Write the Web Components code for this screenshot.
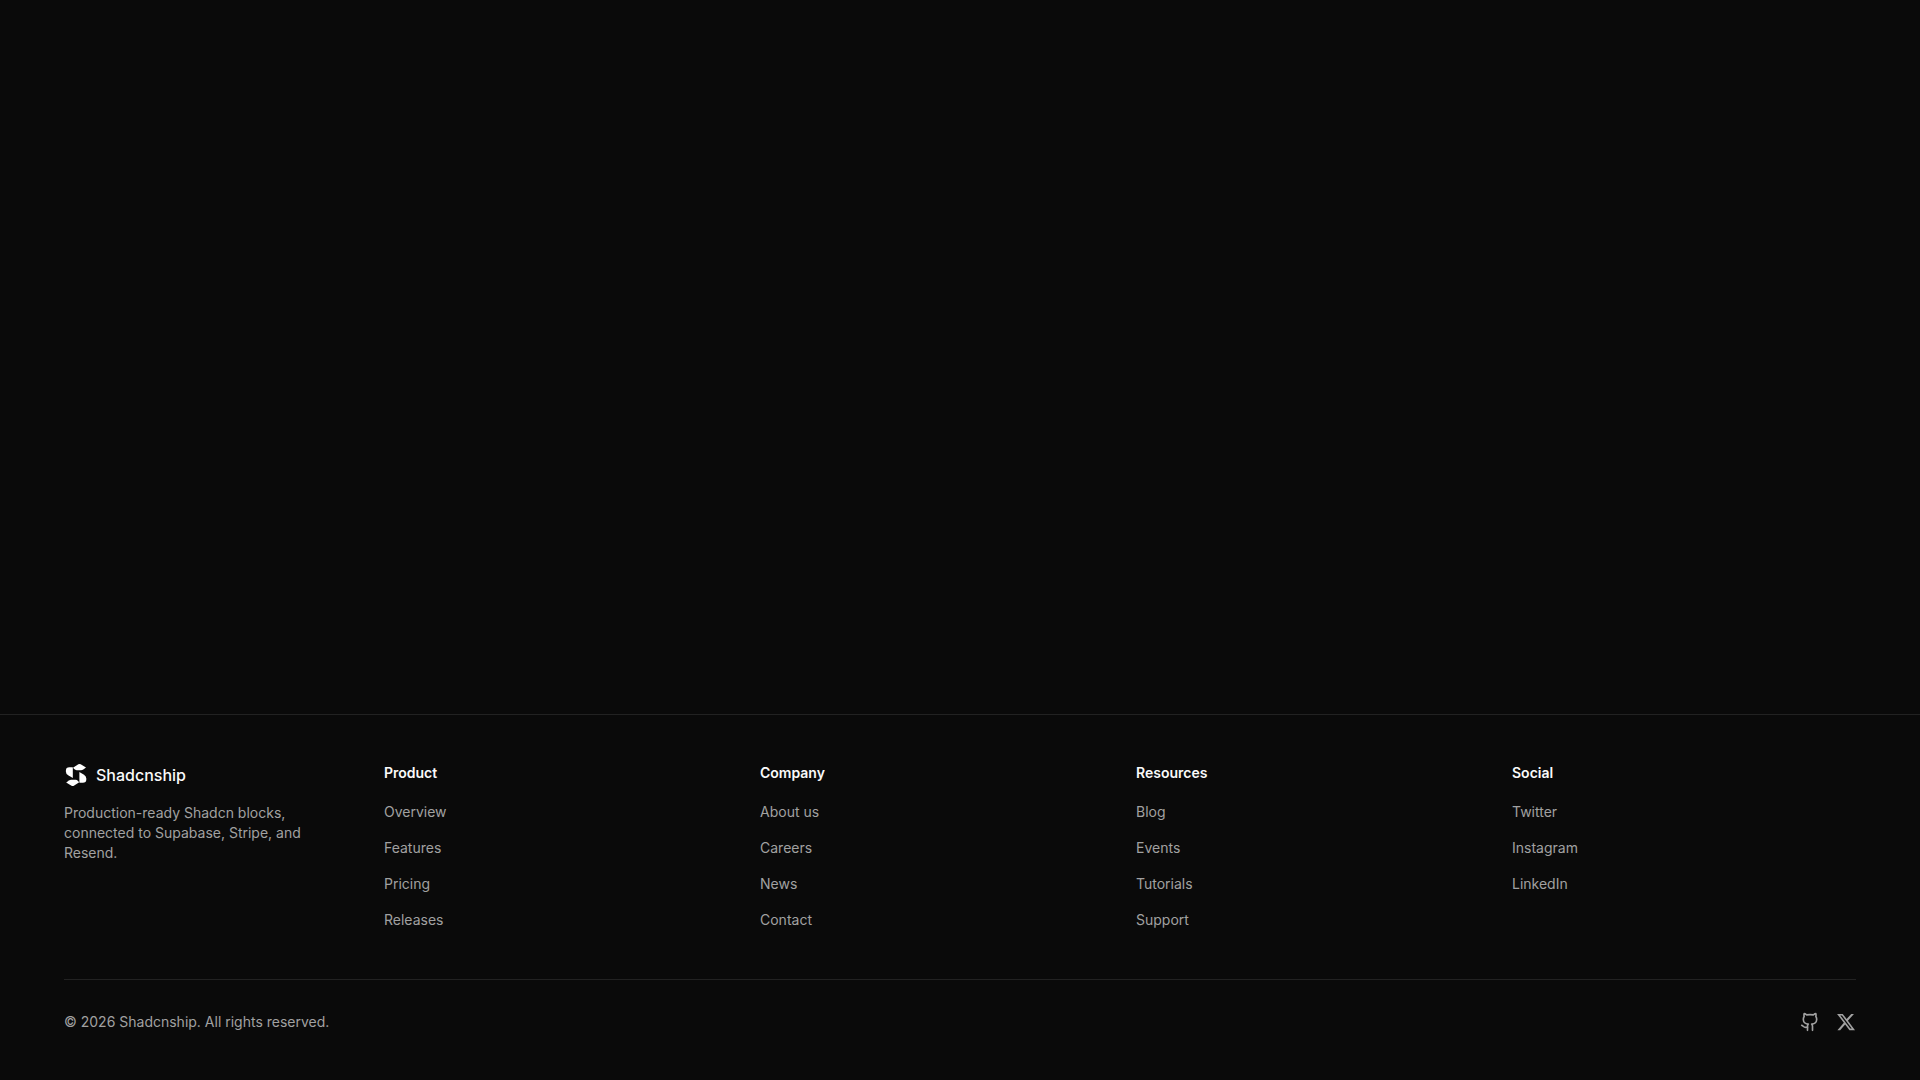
<!DOCTYPE html>
<html lang="en">
<head>
<meta charset="utf-8">
<title>Shadcnship</title>
<style>
  html { color-scheme: dark; }
  body {
    margin: 0;
    background: #0a0a0a;
    color: #fafafa;
    font: 400 16px/24px Inter, "Liberation Sans", sans-serif;
    --muted: #a1a1a1;
    --border: #222222;
  }
</style>
</head>
<body>
<site-page>
  <site-footer slot="footer">
    <brand-block slot="brand" name="Shadcnship">Production-ready Shadcn blocks, connected to Supabase, Stripe, and Resend.</brand-block>
    <link-group heading="Product">
      <nav-link href="#overview">Overview</nav-link>
      <nav-link href="#features">Features</nav-link>
      <nav-link href="#pricing">Pricing</nav-link>
      <nav-link href="#releases">Releases</nav-link>
    </link-group>
    <link-group heading="Company">
      <nav-link href="#about">About us</nav-link>
      <nav-link href="#careers">Careers</nav-link>
      <nav-link href="#news">News</nav-link>
      <nav-link href="#contact">Contact</nav-link>
    </link-group>
    <link-group heading="Resources">
      <nav-link href="#blog">Blog</nav-link>
      <nav-link href="#events">Events</nav-link>
      <nav-link href="#tutorials">Tutorials</nav-link>
      <nav-link href="#support">Support</nav-link>
    </link-group>
    <link-group heading="Social">
      <nav-link href="#twitter">Twitter</nav-link>
      <nav-link href="#instagram">Instagram</nav-link>
      <nav-link href="#linkedin">LinkedIn</nav-link>
    </link-group>
    <span slot="legal">© 2026 Shadcnship. All rights reserved.</span>
    <icon-link slot="social" href="#github" label="GitHub">
      <svg viewBox="0 0 24 24" width="20" height="20" fill="none" stroke="currentColor" stroke-width="2" stroke-linecap="round" stroke-linejoin="round" aria-hidden="true"><path d="M15 22v-4a4.800 4.800 0 0 0-1-3.500c3 0 6-2 6-5.500.080-1.250-.270-2.480-1-3.500.280-1.150.280-2.350 0-3.500 0 0-1 0-3 1.500-2.640-.500-5.360-.500-8 0C6 2 5 2 5 2c-.300 1.150-.300 2.350 0 3.500A5.403 5.403 0 0 0 4 9c0 3.500 3 5.500 6 5.500-.390.490-.680 1.050-.850 1.650-.170.600-.220 1.230-.150 1.850v4"/><path d="M9 18c-4.510 2-5-2-7-2"/></svg>
    </icon-link>
    <icon-link slot="social" href="#x" label="X">
      <svg viewBox="0 0 24 24" width="20" height="20" fill="currentColor" aria-hidden="true"><path d="M18.244 2.250h3.308l-7.227 8.260 8.502 11.240H16.170l-5.214-6.817L4.990 21.750H1.680l7.730-8.835L1.254 2.250H8.080l4.713 6.231zm-1.161 17.520h1.833L7.084 4.126H5.117z"/></svg>
    </icon-link>
  </site-footer>
</site-page>

<script>
  function define(name, markup, connect) {
    const template = document.createElement('template');
    template.innerHTML = markup;
    customElements.define(name, class extends HTMLElement {
      constructor() {
        super();
        this.attachShadow({ mode: 'open' }).append(template.content.cloneNode(true));
      }
      connectedCallback() {
        if (connect) connect(this, this.shadowRoot);
      }
    });
  }

  define('site-page', `
    <style>
      :host { display: flex; flex-direction: column; min-height: 100vh; }
      main { flex: 1; }
    </style>
    <main><slot></slot></main>
    <slot name="footer"></slot>
  `);

  define('site-footer', `
    <style>
      :host { display: block; }
      footer { border-top: 1px solid var(--border); padding: 48px 64px; }
      .top { display: flex; gap: 64px; padding-bottom: 48px; }
      .brand { flex: 0 0 256px; }
      .groups { flex: 1; display: grid; grid-template-columns: repeat(4, minmax(0, 1fr)); gap: 32px; }
      .bottom {
        display: flex; align-items: center; justify-content: space-between;
        border-top: 1px solid var(--border); padding-top: 32px;
      }
      p { margin: 0; font-size: 14px; line-height: 20px; color: var(--muted); }
      .social { display: flex; gap: 16px; }
      @media (max-width: 900px) {
        .top { flex-direction: column; gap: 32px; }
        .brand { flex-basis: auto; }
        .groups { grid-template-columns: repeat(2, minmax(0, 1fr)); }
      }
    </style>
    <footer>
      <div class="top">
        <div class="brand"><slot name="brand"></slot></div>
        <div class="groups"><slot></slot></div>
      </div>
      <div class="bottom">
        <p><slot name="legal"></slot></p>
        <div class="social"><slot name="social"></slot></div>
      </div>
    </footer>
  `);

  define('brand-block', `
    <style>
      :host { display: flex; flex-direction: column; gap: 16px; }
      a { display: flex; align-items: center; gap: 8px; color: inherit; text-decoration: none; font-weight: 500; }
      svg { display: block; }
      p { margin: 0; font-size: 14px; line-height: 20px; color: var(--muted); }
    </style>
    <a href="#home">
      <svg viewBox="0 0 24 24" width="24" height="24" fill="#fff" aria-hidden="true">
        <path d="M9 4.700 14.300 1.300Q15.500.600 16.700 1.300L22 4.600 19.300 6.500Q18.300 7.200 17 7.200H12.600Q11.200 7.200 10.200 6.100Z"/>
        <path d="M8.800 4.500V15L4.200 12.300Q1.900 10.900 1.900 8.400V7.400Q1.900 4.200 5.400 4.200H8.500Z"/>
        <g transform="rotate(180 12.100 12)">
          <path d="M9 4.700 14.300 1.300Q15.500.600 16.700 1.300L22 4.600 19.300 6.500Q18.300 7.200 17 7.200H12.600Q11.200 7.200 10.200 6.100Z"/>
          <path d="M8.800 4.500V15L4.200 12.300Q1.900 10.900 1.900 8.400V7.400Q1.900 4.200 5.400 4.200H8.500Z"/>
        </g>
      </svg>
      <span></span>
    </a>
    <p><slot></slot></p>
  `, (el, root) => { root.querySelector('span').textContent = el.getAttribute('name'); });

  define('link-group', `
    <style>
      :host { display: block; }
      h3 { margin: 0 0 16px; font-size: 14px; line-height: 20px; font-weight: 600; }
      nav { display: flex; flex-direction: column; gap: 12px; }
    </style>
    <h3 id="title"></h3>
    <nav aria-labelledby="title"><slot></slot></nav>
  `, (el, root) => { root.querySelector('h3').textContent = el.getAttribute('heading'); });

  define('nav-link', `
    <style>
      :host { display: block; }
      a { font-size: 14px; line-height: 20px; color: var(--muted); text-decoration: none; }
      a:hover { color: #fafafa; }
    </style>
    <a><slot></slot></a>
  `, (el, root) => { root.querySelector('a').href = el.getAttribute('href'); });

  define('icon-link', `
    <style>
      :host { display: block; }
      a { display: flex; color: var(--muted); }
      a:hover { color: #fafafa; }
    </style>
    <a><slot></slot></a>
  `, (el, root) => {
    const a = root.querySelector('a');
    a.href = el.getAttribute('href');
    a.setAttribute('aria-label', el.getAttribute('label'));
  });
</script>
</body>
</html>
